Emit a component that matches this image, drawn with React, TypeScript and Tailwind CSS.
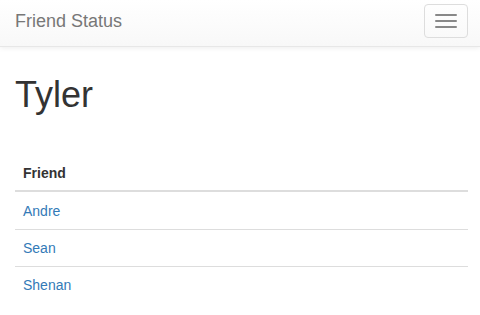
const friends = ['Andre', 'Sean', 'Shenan'];

export default function App() {
  return (
    <div className="min-h-[315px] bg-white font-['Liberation_Sans',Arial,sans-serif] text-[14px] leading-[20px] text-[#333]">
      {/* Navbar */}
      <nav className="flex h-[47px] items-start justify-between border-b border-[#e7e7e7] bg-gradient-to-b from-white to-[#f8f8f8] shadow-[0_1px_5px_rgba(0,0,0,0.075)]">
        <a href="#" className="ml-[15px] mt-[10px] text-[18px] leading-[22px] text-[#777]">
          Friend Status
        </a>
        <button className="mr-[12px] mt-[4px] flex flex-col gap-[4px] rounded-[4px] border border-[#ddd] px-[10px] py-[9px]">
          <span className="block h-[2px] w-[22px] rounded-[1px] bg-[#888]" />
          <span className="block h-[2px] w-[22px] rounded-[1px] bg-[#888]" />
          <span className="block h-[2px] w-[22px] rounded-[1px] bg-[#888]" />
        </button>
      </nav>

      <div className="pl-[15px] pr-[12px]">
        <h1 className="mt-[28px] text-[36px] leading-[40px] font-normal text-[#333]">Tyler</h1>

        <table className="mt-[39px] w-full border-collapse text-left">
          <thead>
            <tr>
              <th className="border-b-2 border-[#ddd] px-[8px] pt-[9px] pb-[7px] font-bold">Friend</th>
            </tr>
          </thead>
          <tbody>
            {friends.map((f, i) => (
              <tr key={f}>
                <td
                  className={
                    i > 0
                      ? 'border-t border-[#ddd] px-[8px] pt-[8px] pb-[8px]'
                      : 'px-[8px] pt-[9px] pb-[8px]'
                  }
                >
                  <a href="#" className="text-[#337ab7]">
                    {f}
                  </a>
                </td>
              </tr>
            ))}
          </tbody>
        </table>
      </div>
    </div>
  );
}
